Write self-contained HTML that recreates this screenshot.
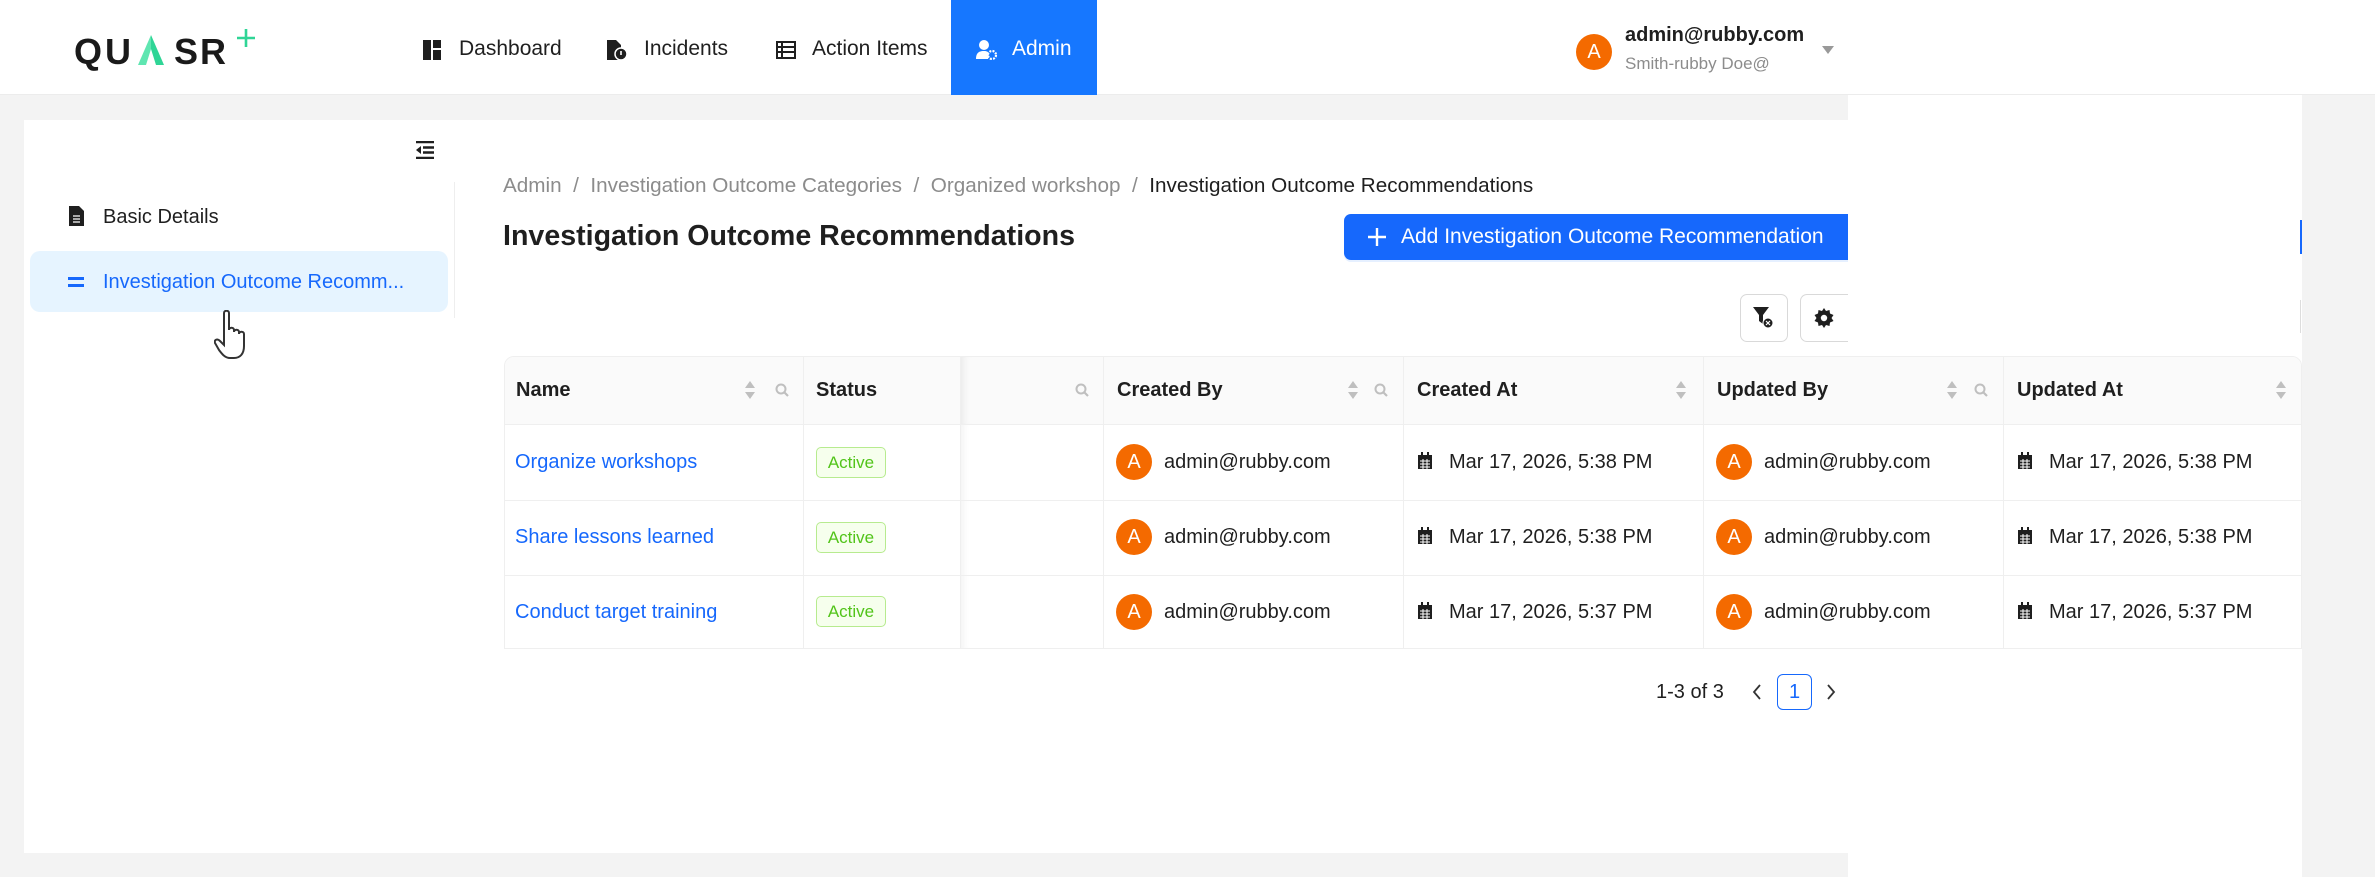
<!DOCTYPE html>
<html><head><meta charset="utf-8">
<style>
*{box-sizing:border-box;margin:0;padding:0}
body{width:2375px;height:877px;overflow:hidden;background:#f3f3f3;font-family:"Liberation Sans",sans-serif;color:#1f1f1f;position:relative}
.a{position:absolute;white-space:nowrap}
.hdr{left:0;top:0;width:2375px;height:95px;background:#fff;border-bottom:1px solid #ececec}
.nav{font-size:21px;color:#1f1f1f;top:37px}
.card{left:24px;top:120px;width:2278px;height:733px;background:#fff}
.over{left:1848px;top:95px;width:454px;height:782px;background:#fff}
.tbl{left:504px;top:356px;width:1798px;height:293px;border:1px solid #efefef;border-radius:10px 10px 0 0;overflow:hidden}
.th{position:absolute;top:0;height:68px;background:#fafafa;border-bottom:1px solid #efefef;border-right:1px solid #efefef}
.thl{position:absolute;top:22px;font-size:20px;font-weight:bold;color:#1f1f1f}
.cell{position:absolute;border-right:1px solid #efefef;border-bottom:1px solid #efefef}
.lnk{font-size:20px;color:#1668fc}
.tag{position:absolute;width:70px;height:31px;border:1px solid #b7eb8f;background:#f6ffed;color:#52c41a;border-radius:5px;font-size:17px;text-align:center;line-height:29px}
.av{position:absolute;width:36px;height:36px;border-radius:50%;background:#f46a00;color:#fff;font-size:20px;text-align:center;line-height:36px}
.tx{position:absolute;font-size:20px;color:#1f1f1f;white-space:nowrap}
</style></head><body>
<div class="a hdr"></div>
<!-- logo -->
<div class="a" style="left:74px;top:31px;font-size:36px;font-weight:bold;letter-spacing:3px;color:#1a1a1a">QU</div>
<svg class="a" style="left:136px;top:35px" width="30" height="32" viewBox="0 0 30 32"><polygon points="15,0 28,30 20,30 15,14" fill="#2fd596"/><polygon points="15,0 15,14 10,30 2,30" fill="#5fe6b1"/></svg>
<div class="a" style="left:174px;top:31px;font-size:36px;font-weight:bold;letter-spacing:2px;color:#1a1a1a">SR</div>
<svg class="a" style="left:236px;top:28px" width="20" height="20"><path d="M10 1V19M1 10H19" stroke="#2fd596" stroke-width="2.6"/></svg>
<!-- nav -->
<svg class="a" style="left:423px;top:40px" width="18" height="20"><rect x="0" y="0" width="8" height="20" fill="#1f1f1f"/><rect x="10" y="0" width="8" height="8" fill="#1f1f1f"/><rect x="10" y="10" width="8" height="10" fill="#1f1f1f"/></svg>
<div class="a nav" style="left:459px">Dashboard</div>
<svg class="a" style="left:607px;top:40px" width="20" height="20"><path d="M0 0H9L14 5V20H0Z" fill="#1f1f1f"/><circle cx="14" cy="14" r="6" fill="#1f1f1f" stroke="#fff" stroke-width="1.5"/><path d="M14 11V15" stroke="#fff" stroke-width="1.6"/></svg>
<div class="a nav" style="left:644px">Incidents</div>
<svg class="a" style="left:776px;top:41px" width="20" height="18"><rect x="1" y="1" width="18" height="16" fill="none" stroke="#1f1f1f" stroke-width="2"/><path d="M1 6H19M1 11H19M6 1V17" stroke="#1f1f1f" stroke-width="2"/></svg>
<div class="a nav" style="left:812px">Action Items</div>
<div class="a" style="left:951px;top:0;width:146px;height:95px;background:#1677ff"></div>
<svg class="a" style="left:976px;top:40px" width="22" height="20"><circle cx="8" cy="5" r="5" fill="#fff"/><path d="M0 19C0 12 4 11 8 11C11 11 12 12 13 13L12 19Z" fill="#fff"/><circle cx="16" cy="15" r="4" fill="none" stroke="#fff" stroke-width="2.2" stroke-dasharray="2 1.2"/></svg>
<div class="a nav" style="left:1012px;color:#fff">Admin</div>
<!-- user -->
<div class="av" style="left:1576px;top:34px">A</div>
<div class="a" style="left:1625px;top:24px;font-size:20px;font-weight:bold">admin@rubby.com</div>
<div class="a" style="left:1625px;top:54px;font-size:17px;color:#8c8c8c">Smith-rubby Doe@</div>
<svg class="a" style="left:1822px;top:46px" width="12" height="8"><path d="M0 0H12L6 8Z" fill="#999"/></svg>
<!-- body -->
<div class="a card"></div>
<div class="a over"></div>
<svg class="a" style="left:416px;top:141px" width="18" height="18"><path d="M0 1H18M7 6.5H18M7 11.5H18M0 17H18" stroke="#1f1f1f" stroke-width="2.4"/><path d="M5 5V13L0 9Z" fill="#1f1f1f"/></svg>
<div class="a" style="left:454px;top:182px;width:1px;height:136px;background:#eee"></div>
<svg class="a" style="left:69px;top:206px" width="15" height="20"><path d="M0 0H10L15 5V20H0Z" fill="#1f1f1f"/><path d="M4 10H11M4 13H11M4 16H11" stroke="#fff" stroke-width="1.3"/></svg>
<div class="a" style="left:103px;top:206px;font-size:20px">Basic Details</div>
<div class="a" style="left:30px;top:251px;width:418px;height:61px;background:#e6f4ff;border-radius:10px"></div>
<svg class="a" style="left:68px;top:277px" width="16" height="10"><path d="M0 1.5H16M0 8.5H16" stroke="#1668fc" stroke-width="3"/></svg>
<div class="a" style="left:103px;top:271px;font-size:20px;color:#1668fc">Investigation Outcome Recomm...</div>
<svg class="a" style="left:214px;top:310px" width="40" height="52" viewBox="0 0 40 52"><path d="M10 3C10 0 15 0 15 3V20C15 17 20 17 20 20V22C20 19 25 19 25 22V24C25 21 30 21 30 24V36C30 44 26 48 20 48H16C11 48 8 44 5 40L1 33C0 30 3 28 6 31L10 35Z" fill="#fff" stroke="#333" stroke-width="2"/></svg>
<!-- breadcrumb -->
<div class="a" style="left:503px;top:174px;font-size:20.7px;color:#8c8c8c">Admin &nbsp;/ &nbsp;Investigation Outcome Categories &nbsp;/ &nbsp;Organized workshop &nbsp;/ &nbsp;<span style="color:#1f1f1f">Investigation Outcome Recommendations</span></div>
<div class="a" style="left:503px;top:220px;font-size:28.6px;font-weight:bold">Investigation Outcome Recommendations</div>
<div class="a" style="left:1344px;top:214px;width:504px;height:46px;background:#1668fc;border-radius:7px 0 0 7px;box-shadow:0 2px 0 #e6f0ff"></div>
<svg class="a" style="left:1368px;top:228px" width="18" height="18"><path d="M9 0V18M0 9H18" stroke="#fff" stroke-width="2.4"/></svg>
<div class="a" style="left:1401px;top:225px;font-size:21px;color:#fff">Add Investigation Outcome Recommendation</div>
<div class="a" style="left:2300px;top:220px;width:2px;height:34px;background:#1668fc"></div>
<div class="a" style="left:2300px;top:300px;width:1px;height:33px;background:#ddd"></div>
<div class="a" style="left:1740px;top:294px;width:48px;height:48px;border:1px solid #d9d9d9;border-radius:7px;background:#fff"></div>
<svg class="a" style="left:1753px;top:307px" width="22" height="22"><path d="M0 0H16L10 8V17L6 14V8Z" fill="#1f1f1f"/><circle cx="15" cy="16" r="5" fill="#1f1f1f" stroke="#fff" stroke-width="1"/><path d="M13 14L17 18M17 14L13 18" stroke="#fff" stroke-width="1.2"/></svg>
<div class="a" style="left:1800px;top:294px;width:48px;height:48px;border:1px solid #d9d9d9;border-right:none;border-radius:7px 0 0 7px;background:#fff"></div>
<svg class="a" style="left:1814px;top:308px" width="20" height="20" viewBox="0 0 20 20"><path d="M10 0L12 3L15.5 2L16 5.5L19.5 7L17.5 10L19.5 13L16 14.5L15.5 18L12 17L10 20L8 17L4.5 18L4 14.5L0.5 13L2.5 10L0.5 7L4 5.5L4.5 2L8 3Z" fill="#1f1f1f"/><circle cx="10" cy="10" r="3.2" fill="#fff"/></svg>
<!-- table -->
<div class="a tbl">
 <div class="th" style="left:0;width:299px"></div>
 <div class="th" style="left:299px;width:157px"></div>
 <div class="th" style="left:456px;width:143px;box-shadow:inset 8px 0 8px -6px rgba(0,0,0,.08)"></div>
 <div class="th" style="left:599px;width:300px"></div>
 <div class="th" style="left:899px;width:300px"></div>
 <div class="th" style="left:1199px;width:300px"></div>
 <div class="th" style="left:1499px;width:300px;border-right:none"></div>
 <div class="thl" style="left:11px">Name</div>
 <div class="thl" style="left:311px">Status</div>
 <div class="thl" style="left:612px">Created By</div>
 <div class="thl" style="left:912px">Created At</div>
 <div class="thl" style="left:1212px">Updated By</div>
 <div class="thl" style="left:1512px">Updated At</div>
 <div class="cell" style="left:0;top:68px;width:299px;height:224px"></div>
 <div class="cell" style="left:299px;top:68px;width:157px;height:224px"></div>
 <div class="cell" style="left:456px;top:68px;width:143px;height:224px;box-shadow:inset 8px 0 8px -6px rgba(0,0,0,.06)"></div>
 <div class="cell" style="left:599px;top:68px;width:300px;height:224px"></div>
 <div class="cell" style="left:899px;top:68px;width:300px;height:224px"></div>
 <div class="cell" style="left:1199px;top:68px;width:300px;height:224px"></div>
 <div class="cell" style="left:1499px;top:68px;width:300px;height:224px;border-right:none"></div>
 <div style="position:absolute;left:0;top:143px;width:1798px;height:1px;background:#efefef"></div>
 <div style="position:absolute;left:0;top:218px;width:1798px;height:1px;background:#efefef"></div>
</div>
<svg class="a" width="0" height="0"><defs>
<g id="srt"><path d="M5 0L10 7H0Z M5 18L10 11H0Z" fill="#bfbfbf"/></g>
<g id="sch"><circle cx="6" cy="6" r="4.5" fill="none" stroke="#bfbfbf" stroke-width="2"/><path d="M9.5 9.5L13 13" stroke="#bfbfbf" stroke-width="2.2"/></g>
<g id="cal"><rect x="0" y="3" width="14" height="14" fill="#1f1f1f"/><rect x="3" y="0" width="2" height="4" fill="#1f1f1f"/><rect x="9" y="0" width="2" height="4" fill="#1f1f1f"/><path d="M2 9H12M2 12H12M2 15H12M5 7V17M9 7V17" stroke="#fff" stroke-width="1"/></g>
</defs></svg>
<svg class="a" style="left:745px;top:381px" width="10" height="18"><use href="#srt"/></svg>
<svg class="a" style="left:775px;top:383px" width="14" height="14"><use href="#sch"/></svg>
<svg class="a" style="left:1075px;top:383px" width="14" height="14"><use href="#sch"/></svg>
<svg class="a" style="left:1348px;top:381px" width="10" height="18"><use href="#srt"/></svg>
<svg class="a" style="left:1374px;top:383px" width="14" height="14"><use href="#sch"/></svg>
<svg class="a" style="left:1676px;top:381px" width="10" height="18"><use href="#srt"/></svg>
<svg class="a" style="left:1947px;top:381px" width="10" height="18"><use href="#srt"/></svg>
<svg class="a" style="left:1974px;top:383px" width="14" height="14"><use href="#sch"/></svg>
<svg class="a" style="left:2276px;top:381px" width="10" height="18"><use href="#srt"/></svg>
<!-- rows -->
<div class="tx lnk" style="left:515px;top:451px;color:#1668fc">Organize workshops</div>
<div class="tx lnk" style="left:515px;top:526px;color:#1668fc">Share lessons learned</div>
<div class="tx lnk" style="left:515px;top:601px;color:#1668fc">Conduct target training</div>
<div class="tag" style="left:816px;top:447px">Active</div>
<div class="tag" style="left:816px;top:522px">Active</div>
<div class="tag" style="left:816px;top:596px">Active</div>

<div class="av" style="left:1116px;top:444px">A</div><div class="tx" style="left:1164px;top:451px">admin@rubby.com</div>
<div class="av" style="left:1116px;top:519px">A</div><div class="tx" style="left:1164px;top:526px">admin@rubby.com</div>
<div class="av" style="left:1116px;top:594px">A</div><div class="tx" style="left:1164px;top:601px">admin@rubby.com</div>
<div class="av" style="left:1716px;top:444px">A</div><div class="tx" style="left:1764px;top:451px">admin@rubby.com</div>
<div class="av" style="left:1716px;top:519px">A</div><div class="tx" style="left:1764px;top:526px">admin@rubby.com</div>
<div class="av" style="left:1716px;top:594px">A</div><div class="tx" style="left:1764px;top:601px">admin@rubby.com</div>

<svg class="a" style="left:1418px;top:452px" width="14" height="17"><use href="#cal"/></svg><div class="tx" style="left:1449px;top:451px">Mar 17, 2026, 5:38 PM</div>
<svg class="a" style="left:1418px;top:527px" width="14" height="17"><use href="#cal"/></svg><div class="tx" style="left:1449px;top:526px">Mar 17, 2026, 5:38 PM</div>
<svg class="a" style="left:1418px;top:602px" width="14" height="17"><use href="#cal"/></svg><div class="tx" style="left:1449px;top:601px">Mar 17, 2026, 5:37 PM</div>
<svg class="a" style="left:2018px;top:452px" width="14" height="17"><use href="#cal"/></svg><div class="tx" style="left:2049px;top:451px">Mar 17, 2026, 5:38 PM</div>
<svg class="a" style="left:2018px;top:527px" width="14" height="17"><use href="#cal"/></svg><div class="tx" style="left:2049px;top:526px">Mar 17, 2026, 5:38 PM</div>
<svg class="a" style="left:2018px;top:602px" width="14" height="17"><use href="#cal"/></svg><div class="tx" style="left:2049px;top:601px">Mar 17, 2026, 5:37 PM</div>
<!-- pagination -->
<div class="tx" style="left:1656px;top:681px">1-3 of 3</div>
<svg class="a" style="left:1752px;top:684px" width="10" height="16"><path d="M8 1L2 8L8 15" fill="none" stroke="#333" stroke-width="1.8"/></svg>
<div class="a" style="left:1777px;top:674px;width:35px;height:36px;border:1px solid #1668fc;border-radius:6px;color:#1668fc;font-size:20px;text-align:center;line-height:34px">1</div>
<svg class="a" style="left:1826px;top:684px" width="10" height="16"><path d="M2 1L8 8L2 15" fill="none" stroke="#333" stroke-width="1.8"/></svg>
</body></html>
